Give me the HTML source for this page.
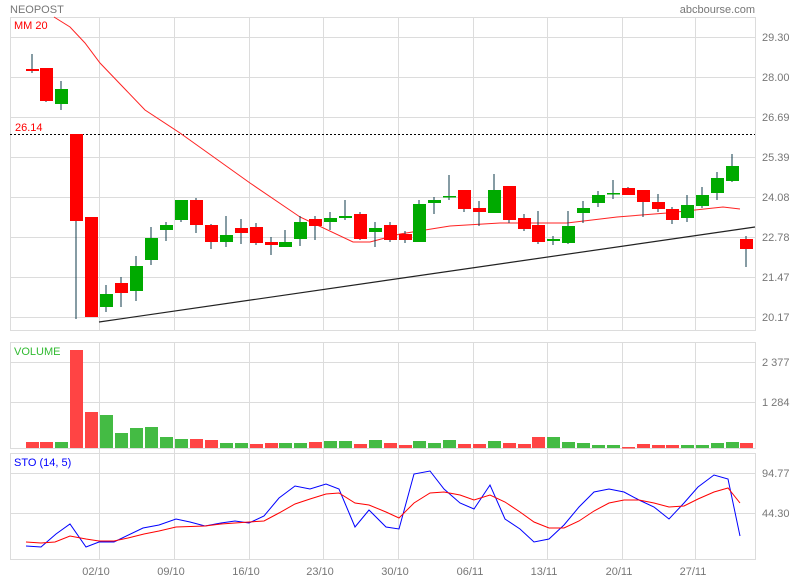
<!DOCTYPE html>
<html><head><meta charset="utf-8"><style>
html,body{margin:0;padding:0;background:#fff;}
svg{display:block;font-family:"Liberation Sans",Arial,sans-serif;}
</style></head><body>
<svg width="800" height="580" viewBox="0 0 800 580" xmlns="http://www.w3.org/2000/svg">
<rect width="800" height="580" fill="#fff"/>
<g stroke="#dcdcdc" stroke-width="1" fill="none">
<rect x="10.5" y="17.5" width="745" height="313"/>
<rect x="10.5" y="342.5" width="745" height="106"/>
<rect x="10.5" y="453.5" width="745" height="106"/>
<path d="M10 37.5H755M10 77.5H755M10 117.5H755M10 157.5H755M10 197.5H755M10 237.5H755M10 277.5H755M10 317.5H755"/>
<path d="M10 362.5H755M10 402.5H755M10 473.5H755M10 513.5H755"/>
<path d="M99.5 17V330M174.5 17V330M249.5 17V330M323.5 17V330M398.5 17V330M473.5 17V330M547.5 17V330M622.5 17V330M695.5 17V330"/>
<path d="M99.5 342V559M174.5 342V559M249.5 342V559M323.5 342V559M398.5 342V559M473.5 342V559M547.5 342V559M622.5 342V559M695.5 342V559"/>
</g>
<g font-size="11" fill="#777">
<text x="10" y="13">NEOPOST</text>
<text x="755" y="13" text-anchor="end">abcbourse.com</text>
<text x="762" y="41">29.30</text><text x="762" y="81">28.00</text><text x="762" y="121">26.69</text><text x="762" y="161">25.39</text><text x="762" y="201">24.08</text><text x="762" y="241">22.78</text><text x="762" y="281">21.47</text><text x="762" y="321">20.17</text>
<text x="762" y="366">2 377</text><text x="762" y="406">1 284</text>
<text x="762" y="477">94.77</text><text x="762" y="517">44.30</text>
<g text-anchor="middle"><text x="96" y="575">02/10</text><text x="171" y="575">09/10</text><text x="246" y="575">16/10</text><text x="320" y="575">23/10</text><text x="395" y="575">30/10</text><text x="470" y="575">06/11</text><text x="544" y="575">13/11</text><text x="619" y="575">20/11</text><text x="693" y="575">27/11</text></g>
</g>
<text x="14" y="29" font-size="11" fill="#f00">MM 20</text>
<text x="15" y="131" font-size="11" fill="#f00">26.14</text>
<text x="14" y="355" font-size="11" fill="#3b3">VOLUME</text>
<text x="14" y="466" font-size="11" fill="#00f">STO (14, 5)</text>
<line x1="10" y1="134.5" x2="755" y2="134.5" stroke="#000" stroke-dasharray="2,2"/>
<line x1="99" y1="322" x2="755" y2="227" stroke="#222" stroke-width="1.2"/>
<polyline fill="none" stroke="#f22" stroke-width="1" points="54,17 70,27 85,43 100,63 145,110 180,133 250,183 300,217 353,242 370,242 400,234 450,226 500,223 567,223 617,217 667,213 723,207 740,209"/>
<g id="c" stroke="#0d3a4a" stroke-width="1.2"></g>
<g id="v"></g>
<polyline fill="none" stroke="#00f" stroke-width="1" points="26,546 41,547 56,534 70,524 86,547 99,542 114,542 143,528 159,525 176,519 190,522 205,526 221,523 235,521 249,523 264,516 279,498 295,486 310,489 326,484 339,489 355,527 369,510 386,527 399,529 414,474 430,471 444,489 460,503 474,509 490,485 505,519 520,529 534,542 549,539 564,525 579,507 594,492 609,489 624,492 639,500 654,507 669,519 684,503 698,487 714,475 728,479 740,536"/>
<polyline fill="none" stroke="#f00" stroke-width="1" points="26,542 41,543 55,542 70,536 86,539 99,541 114,541 128,538 144,534 159,531 176,527 205,526 221,524 235,523 249,522 264,521 279,513 295,504 310,499 326,494 339,493 355,503 369,505 386,512 399,518 414,503 430,493 444,492 460,495 474,500 490,495 505,502 520,512 534,522 549,528 564,528 579,521 594,511 609,503 624,500 639,500 654,503 669,507 684,506 698,499 714,492 728,488 740,503"/>
<g stroke="#0d3a4a" stroke-width="1">
<!-- candles: x, wickTop, wickBot -->
<path d="M32 54V73M46 68V102M61 81V110M76 134V319M91 217V317M106 285V312M121 277V307M136 256V301M151 227V265M166 222V241M181 200V222M196 198V233M211 224V249M226 216V247M241 219V244M256 223V245M271 237V255M285 230V247M300 216V246M315 216V240M330 212V230M345 200V220M360 212V240M375 222V247M390 222V242M405 231V243M419 200V242M434 197V214M449 175V200M464 190V212M479 201V226M494 174V213M509 186V223M524 214V231M538 211V244M553 236V245M568 211V244M583 201V223M598 191V207M613 180V199M628 187V195M643 190V217M658 194V212M672 207V224M687 195V222M702 187V208M717 172V200M732 154V182M746 236V267"/>
</g>
<g fill="#f00">
<rect x="26" y="69" width="13" height="2"/><rect x="40" y="68" width="13" height="33"/><rect x="70" y="134" width="13" height="87"/><rect x="85" y="217" width="13" height="100"/><rect x="115" y="283" width="13" height="10"/><rect x="190" y="200" width="13" height="25"/><rect x="205" y="225" width="13" height="17"/><rect x="235" y="228" width="13" height="5"/><rect x="250" y="227" width="13" height="16"/><rect x="265" y="242" width="13" height="3"/><rect x="309" y="219" width="13" height="7"/><rect x="354" y="214" width="13" height="25"/><rect x="384" y="225" width="13" height="15"/><rect x="399" y="234" width="13" height="6"/><rect x="458" y="190" width="13" height="19"/><rect x="473" y="208" width="13" height="4"/><rect x="503" y="186" width="13" height="34"/><rect x="518" y="218" width="13" height="11"/><rect x="532" y="225" width="13" height="17"/><rect x="622" y="188" width="13" height="7"/><rect x="637" y="190" width="13" height="12"/><rect x="652" y="202" width="13" height="7"/><rect x="666" y="209" width="13" height="11"/><rect x="740" y="239" width="13" height="10"/>
</g>
<g fill="#0a0">
<rect x="55" y="89" width="13" height="15"/><rect x="100" y="294" width="13" height="13"/><rect x="130" y="266" width="13" height="25"/><rect x="145" y="238" width="13" height="22"/><rect x="160" y="225" width="13" height="5"/><rect x="175" y="200" width="13" height="20"/><rect x="220" y="235" width="13" height="7"/><rect x="279" y="242" width="13" height="5"/><rect x="294" y="222" width="13" height="17"/><rect x="324" y="218" width="13" height="4"/><rect x="339" y="216" width="13" height="2"/><rect x="369" y="228" width="13" height="4"/><rect x="413" y="204" width="13" height="38"/><rect x="428" y="200" width="13" height="3"/><rect x="443" y="196" width="13" height="1.5"/><rect x="488" y="190" width="13" height="23"/><rect x="547" y="239" width="13" height="2"/><rect x="562" y="226" width="13" height="17"/><rect x="577" y="208" width="13" height="5"/><rect x="592" y="195" width="13" height="8"/><rect x="607" y="193" width="13" height="1.5"/><rect x="681" y="205" width="13" height="13"/><rect x="696" y="195" width="13" height="11"/><rect x="711" y="178" width="13" height="15"/><rect x="726" y="166" width="13" height="15"/>
</g>
<g fill="#f44">
<rect x="26" y="442" width="13" height="6"/><rect x="40" y="442" width="13" height="6"/><rect x="70" y="350" width="13" height="98"/><rect x="85" y="412" width="13" height="36"/><rect x="190" y="439" width="13" height="9"/><rect x="205" y="440" width="13" height="8"/><rect x="250" y="444" width="13" height="4"/><rect x="265" y="443" width="13" height="5"/><rect x="309" y="442" width="13" height="6"/><rect x="354" y="444" width="13" height="4"/><rect x="384" y="443" width="13" height="5"/><rect x="399" y="445" width="13" height="3"/><rect x="458" y="444" width="13" height="4"/><rect x="473" y="444" width="13" height="4"/><rect x="503" y="443" width="13" height="5"/><rect x="518" y="444" width="13" height="4"/><rect x="532" y="437" width="13" height="11"/><rect x="622" y="447" width="13" height="1.5"/><rect x="637" y="444" width="13" height="4"/><rect x="652" y="445" width="13" height="3"/><rect x="666" y="445" width="13" height="3"/><rect x="740" y="443" width="13" height="5"/>
</g>
<g fill="#4b4">
<rect x="55" y="442" width="13" height="6"/><rect x="100" y="415" width="13" height="33"/><rect x="115" y="433" width="13" height="15"/><rect x="130" y="428" width="13" height="20"/><rect x="145" y="427" width="13" height="21"/><rect x="160" y="437" width="13" height="11"/><rect x="175" y="439" width="13" height="9"/><rect x="220" y="443" width="13" height="5"/><rect x="235" y="443" width="13" height="5"/><rect x="279" y="443" width="13" height="5"/><rect x="294" y="443" width="13" height="5"/><rect x="324" y="441" width="13" height="7"/><rect x="339" y="441" width="13" height="7"/><rect x="369" y="440" width="13" height="8"/><rect x="413" y="441" width="13" height="7"/><rect x="428" y="443" width="13" height="5"/><rect x="443" y="440" width="13" height="8"/><rect x="488" y="441" width="13" height="7"/><rect x="547" y="437" width="13" height="11"/><rect x="562" y="442" width="13" height="6"/><rect x="577" y="443" width="13" height="5"/><rect x="592" y="445" width="13" height="3"/><rect x="607" y="445" width="13" height="3"/><rect x="681" y="445" width="13" height="3"/><rect x="696" y="445" width="13" height="3"/><rect x="711" y="443" width="13" height="5"/><rect x="726" y="442" width="13" height="6"/>
</g>
</svg>
</body></html>
